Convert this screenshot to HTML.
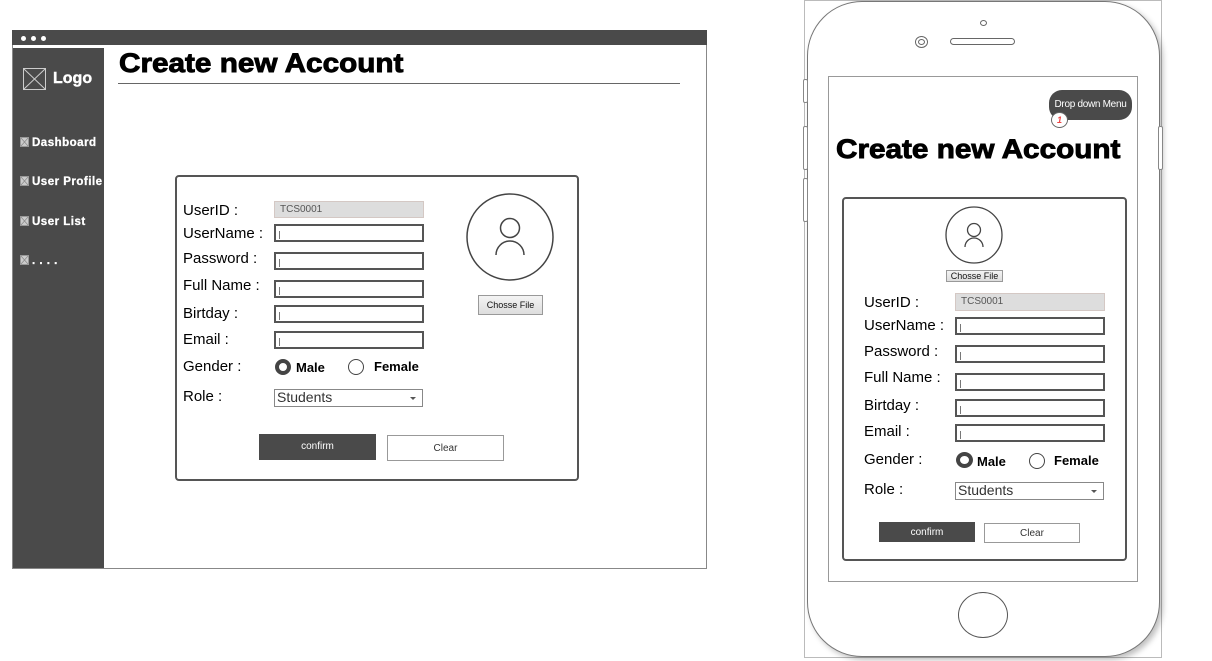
<!DOCTYPE html>
<html><head><meta charset="utf-8"><style>
*{margin:0;padding:0;box-sizing:border-box}
body{width:1212px;height:661px;background:#fff;position:relative;overflow:hidden;font-family:"Liberation Sans",Arial,sans-serif;color:#000}
.a{position:absolute}
.lbl{position:absolute;font-size:15px;line-height:16px;white-space:nowrap}
.inp{position:absolute;border:2px solid #555;background:#fff;height:18px;width:150px}
.inp::after{content:"";position:absolute;left:3px;top:5px;width:1px;height:8px;background:#777}
.gray{background:#ddd;border:1px solid #d4c8c4;font-size:10px;color:#555;padding-left:5px;line-height:15px}
.gray::after{display:none}
.sel{position:absolute;border:1px solid #888;background:#fff;font-size:14px;line-height:15px;padding-left:2px;color:#333}
.sel::after{content:"";position:absolute;right:6px;top:7px;border:3px solid transparent;border-top:3px solid #555}
.rad{position:absolute;border-radius:50%;background:#fff}
.rt{position:absolute;font-weight:bold;font-size:13px;line-height:14px}
.btnd{position:absolute;background:#4a4a4a;color:#fff;font-size:10px;text-align:center}
.btnl{position:absolute;background:#fff;border:1px solid #999;font-size:10px;text-align:center;color:#333}
.fb{position:absolute;background:linear-gradient(#f4f4f4,#ddd);border:1px solid #999;font-size:9px;text-align:center;color:#111}
.nav{position:absolute;left:20px;color:#fff;font-weight:bold;font-size:11.5px;line-height:12px;white-space:nowrap;letter-spacing:0.5px;-webkit-text-stroke:0.3px #fff}
.nav svg{display:inline-block;margin-right:3px;vertical-align:-1px}
.ttl{position:absolute;font-size:27px;font-weight:900;white-space:nowrap;-webkit-text-stroke:0.9px #000;transform-origin:0 0;transform:scaleX(1.1)}
</style></head><body>
<!-- desktop -->
<div class="a" style="left:12px;top:30px;width:695px;height:539px;border:1px solid #888"></div>
<div class="a" style="left:12px;top:30px;width:695px;height:15px;background:#4a4a4a"></div>
<div class="a" style="left:21px;top:36px;width:5px;height:5px;border-radius:50%;background:#fff"></div>
<div class="a" style="left:31px;top:36px;width:5px;height:5px;border-radius:50%;background:#fff"></div>
<div class="a" style="left:41px;top:36px;width:5px;height:5px;border-radius:50%;background:#fff"></div>
<div class="a" style="left:13px;top:48px;width:91px;height:520px;background:#4a4a4a"></div>
<svg class="a" style="left:23px;top:68px" width="23" height="22"><rect x="0.5" y="0.5" width="22" height="21" fill="#4a4a4a" stroke="#ccc"/><path d="M1 1L22 21M22 1L1 21" stroke="#ccc"/></svg>
<div class="a" style="left:53px;top:70px;color:#fff;font-weight:bold;font-size:16px;-webkit-text-stroke:0.4px #fff">Logo</div>
<div class="nav" style="top:137px"><svg width="9" height="10"><rect x="0.5" y="0.5" width="8" height="9" fill="#ccc" stroke="#999"/><path d="M1 1L8 9M8 1L1 9" stroke="#888" stroke-width="0.7"/></svg>Dashboard</div>
<div class="nav" style="top:176px"><svg width="9" height="10"><rect x="0.5" y="0.5" width="8" height="9" fill="#ccc" stroke="#999"/><path d="M1 1L8 9M8 1L1 9" stroke="#888" stroke-width="0.7"/></svg>User Profile</div>
<div class="nav" style="top:216px"><svg width="9" height="10"><rect x="0.5" y="0.5" width="8" height="9" fill="#ccc" stroke="#999"/><path d="M1 1L8 9M8 1L1 9" stroke="#888" stroke-width="0.7"/></svg>User List</div>
<div class="nav" style="top:255px"><svg width="9" height="10"><rect x="0.5" y="0.5" width="8" height="9" fill="#ccc" stroke="#999"/><path d="M1 1L8 9M8 1L1 9" stroke="#888" stroke-width="0.7"/></svg>. . . .</div>
<div class="ttl" style="left:119px;top:48px">Create new Account</div>
<div class="a" style="left:118px;top:83px;width:562px;height:1px;background:#666"></div>

<div class="a" style="left:175px;top:175px;width:404px;height:306px;border:2px solid #555;border-radius:4px"></div>
<div class="lbl" style="left:183px;top:203px">UserID :</div>
<div class="lbl" style="left:183px;top:226px">UserName :</div>
<div class="lbl" style="left:183px;top:251px">Password :</div>
<div class="lbl" style="left:183px;top:278px">Full Name :</div>
<div class="lbl" style="left:183px;top:306px">Birtday :</div>
<div class="lbl" style="left:183px;top:332px">Email :</div>
<div class="lbl" style="left:183px;top:359px">Gender :</div>
<div class="lbl" style="left:183px;top:389px">Role :</div>
<div class="inp gray" style="left:274px;top:201px;height:17px">TCS0001</div>
<div class="inp" style="left:274px;top:224px"></div>
<div class="inp" style="left:274px;top:252px"></div>
<div class="inp" style="left:274px;top:280px"></div>
<div class="inp" style="left:274px;top:305px"></div>
<div class="inp" style="left:274px;top:331px"></div>
<div class="rad" style="left:275px;top:359px;width:16px;height:16px;border:4px solid #444"></div>
<div class="rt" style="left:296px;top:361px">Male</div>
<div class="rad" style="left:348px;top:359px;width:16px;height:16px;border:1.5px solid #444"></div>
<div class="rt" style="left:374px;top:360px">Female</div>
<div class="sel" style="left:274px;top:389px;width:149px;height:18px">Students</div>
<div class="btnd" style="left:259px;top:434px;width:117px;height:26px;line-height:26px">confirm</div>
<div class="btnl" style="left:387px;top:435px;width:117px;height:26px;line-height:25px">Clear</div>
<svg class="a" style="left:464px;top:191px" width="92" height="92"><circle cx="46" cy="46" r="43" fill="none" stroke="#444" stroke-width="1.5"/><circle cx="46" cy="37" r="9.5" fill="none" stroke="#444" stroke-width="1.5"/><path d="M32 64A14 14 0 0 1 60 64" fill="none" stroke="#444" stroke-width="1.5"/></svg>
<div class="fb" style="left:478px;top:295px;width:65px;height:20px;line-height:18px">Chosse File</div>

<!-- phone -->
<div class="a" style="left:804px;top:0;width:358px;height:658px;border:1px solid #bbb"></div>
<div class="a" style="left:807px;top:1px;width:353px;height:656px;border:1.5px solid #777;border-radius:55px;background:#fff;box-shadow:3px 3px 6px rgba(0,0,0,0.25)"></div>
<div class="a" style="left:803px;top:79px;width:5px;height:24px;border:1px solid #888;border-radius:2px;background:#fff"></div>
<div class="a" style="left:803px;top:126px;width:5px;height:44px;border:1px solid #888;border-radius:2px;background:#fff"></div>
<div class="a" style="left:803px;top:178px;width:5px;height:44px;border:1px solid #888;border-radius:2px;background:#fff"></div>
<div class="a" style="left:1158px;top:126px;width:5px;height:44px;border:1px solid #888;border-radius:2px;background:#fff"></div>
<div class="a" style="left:980px;top:20px;width:7px;height:6px;border:1px solid #666;border-radius:50%"></div>
<div class="a" style="left:915px;top:36px;width:13px;height:12px;border:1px solid #666;border-radius:50%"></div>
<div class="a" style="left:918px;top:39px;width:7px;height:6px;border:1px solid #666;border-radius:50%"></div>
<div class="a" style="left:950px;top:38px;width:65px;height:7px;border:1px solid #666;border-radius:4px"></div>
<div class="a" style="left:828px;top:76px;width:310px;height:506px;border:1px solid #999"></div>
<div class="a" style="left:1049px;top:90px;width:83px;height:30px;background:#4a4a4a;border-radius:13px;color:#fff;font-size:10px;line-height:30px;text-align:center;letter-spacing:-0.3px">Drop down Menu</div>
<div class="a" style="left:1051px;top:112px;width:17px;height:16px;background:#fff;border:1px solid #666;border-radius:50%;color:#e44;font-size:9px;font-weight:bold;text-align:center;line-height:14px;font-style:italic">1</div>
<div class="ttl" style="left:836px;top:134px">Create new Account</div>

<div class="a" style="left:842px;top:197px;width:285px;height:364px;border:2px solid #555;border-radius:4px"></div>
<svg class="a" style="left:944px;top:205px" width="60" height="60"><circle cx="30" cy="30" r="28" fill="none" stroke="#444" stroke-width="1.3"/><circle cx="30" cy="25" r="6.5" fill="none" stroke="#444" stroke-width="1.3"/><path d="M21 42A9 9 0 0 1 39 42" fill="none" stroke="#444" stroke-width="1.3"/></svg>
<div class="fb" style="left:946px;top:270px;width:57px;height:12px;line-height:10px">Chosse File</div>
<div class="lbl" style="left:864px;top:295px">UserID :</div>
<div class="lbl" style="left:864px;top:318px">UserName :</div>
<div class="lbl" style="left:864px;top:344px">Password :</div>
<div class="lbl" style="left:864px;top:370px">Full Name :</div>
<div class="lbl" style="left:864px;top:398px">Birtday :</div>
<div class="lbl" style="left:864px;top:424px">Email :</div>
<div class="lbl" style="left:864px;top:452px">Gender :</div>
<div class="lbl" style="left:864px;top:482px">Role :</div>
<div class="inp gray" style="left:955px;top:293px;height:18px">TCS0001</div>
<div class="inp" style="left:955px;top:317px"></div>
<div class="inp" style="left:955px;top:345px"></div>
<div class="inp" style="left:955px;top:373px"></div>
<div class="inp" style="left:955px;top:399px"></div>
<div class="inp" style="left:955px;top:424px"></div>
<div class="rad" style="left:956px;top:452px;width:17px;height:16px;border:4px solid #444"></div>
<div class="rt" style="left:977px;top:455px">Male</div>
<div class="rad" style="left:1029px;top:453px;width:16px;height:16px;border:1.5px solid #444"></div>
<div class="rt" style="left:1054px;top:454px">Female</div>
<div class="sel" style="left:955px;top:482px;width:149px;height:18px">Students</div>
<div class="btnd" style="left:879px;top:522px;width:96px;height:20px;line-height:21px">confirm</div>
<div class="btnl" style="left:984px;top:523px;width:96px;height:20px;line-height:19px">Clear</div>
<div class="a" style="left:958px;top:592px;width:50px;height:46px;border:1px solid #555;border-radius:50%"></div>
</body></html>
